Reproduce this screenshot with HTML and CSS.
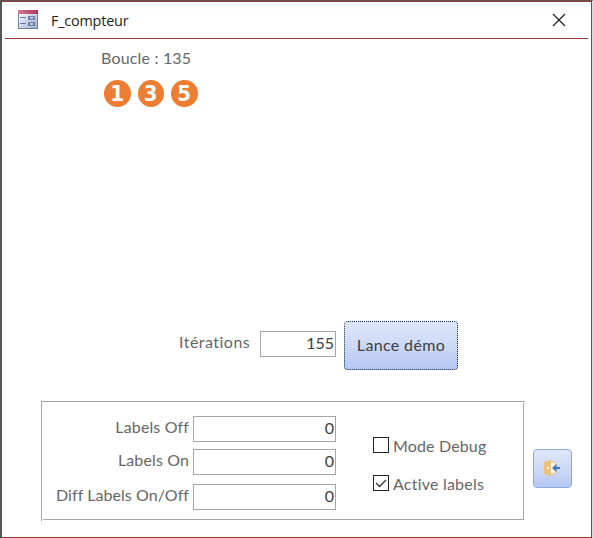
FILE: index.html
```html
<!DOCTYPE html>
<html lang="fr">
<head>
<meta charset="utf-8">
<title>F_compteur</title>
<link rel="stylesheet" href="styles.css">
</head>
<body>
<main class="window">
  <header class="titlebar">
    <svg class="form-icon" width="20" height="19" viewBox="0 0 20 19" shape-rendering="crispEdges">
      <defs><linearGradient id="paper" x1="0" y1="0" x2="1" y2="1"><stop offset="0" stop-color="#fff"/><stop offset="1" stop-color="#9cadd3"/></linearGradient>
      <linearGradient id="bar" x1="0" x2="1"><stop offset="0" stop-color="#d87a9b"/><stop offset="1" stop-color="#aa3455"/></linearGradient></defs>
      <rect x=".5" y=".5" width="19" height="18" fill="url(#paper)" stroke="#71809e"/>
      <rect width="20" height="4" fill="url(#bar)"/>
      <path d="M2 7h6v1H2zM2 13h6v1H2z" fill="#687ba0"/>
      <path d="M10 6h7v4h-7zM10 12h7v4h-7z" fill="#7181a3"/><path d="M12 7h3v2h-3zM12 13h3v2h-3z" fill="#bdc9e0"/>
    </svg>
    <h1 class="title">F_compteur</h1>
    <svg class="close" width="14" height="14" viewBox="0 0 14 14"><path d="M1 1l12 12M13 1L1 13" stroke="#222" stroke-width="1.3"/></svg>
  </header>
  <section class="counter">
    <p class="loop"><span class="label">Boucle : 135</span></p>
    <div class="digits"><span>1</span><span>3</span><span>5</span></div>
  </section>
  <section class="launch">
    <span class="label iterations">Itérations</span>
    <div class="field short">155</div>
    <button class="start">Lance démo</button>
  </section>
  <section class="bottom">
    <div class="panel">
      <div class="results">
        <span class="label">Labels Off</span><div class="field">0</div>
        <span class="label">Labels On</span><div class="field">0</div>
        <span class="label diff">Diff Labels On/Off</span><div class="field">0</div>
      </div>
      <div class="options">
        <div class="option"><svg width="16" height="16"><rect x=".5" y=".5" width="15" height="15" fill="#fff" stroke="#222"/></svg><span class="label debug">Mode Debug</span></div>
        <div class="option"><svg width="16" height="16"><rect x=".5" y=".5" width="15" height="15" fill="#fff" stroke="#222"/><path d="M3 8l3.500 3.500L13 5" fill="none" stroke="#333" stroke-width="1.300"/></svg><span class="label active">Active labels</span></div>
      </div>
    </div>
    <button class="exit" aria-label="Quitter">
      <svg width="18" height="16" viewBox="0 0 18 16"><path d="M6 2h5v12H6z" fill="#fff" stroke="#edc17c"/><path d="M0 2L7 0v16L0 14z" fill="#edc17c"/><circle cx="4" cy="8" r="1" fill="#fff"/><path d="M8 8l4.500-4V7H16v2h-3.500v3z" fill="#4076b5"/></svg>
    </button>
  </section>
</main>
</body>
</html>
```
FILE: styles.css
```css
* { box-sizing: border-box; }
body { margin: 0; background: #fff; font-family: Lato, sans-serif; color: #666; font-variant-ligatures: none; }
.window { width: 593px; height: 538px; border-top: 1px solid #555; border-left: 1px solid #555; border-right: 1px solid #ddd; box-shadow: inset 0 0 0 1px #a4373a; padding: 1px; display: flex; flex-direction: column; overflow: hidden; }
.titlebar { height: 37px; margin: 0 3px; border-bottom: 1px solid #a4373a; display: flex; align-items: flex-start; padding: 8px 22px 0 13px; flex: none; background: linear-gradient(#f7faff, #fff 25%); }
.title { margin: 1px auto 0 13px; font: 14.4px/20px "Open Sans", sans-serif; color: #222; letter-spacing: -.2px; }
.close { margin-top: 3px; }
.label { font-size: 16px; line-height: 20px; white-space: nowrap; letter-spacing: .1px; }
.counter { height: 282px; padding: 9px 0 0 99px; flex: none; }
.loop { margin: 0; height: 20px; line-height: 20px; }
.loop .label { letter-spacing: .18px; }
.digits { display: flex; gap: 7px; margin: 12px 0 0 3px; }
.digits span { width: 26.5px; height: 27px; border-radius: 50%; background: #ed7d31; color: #fff; font: bold 22px/27px "DejaVu Sans", "DejaVu Sans Condensed", sans-serif; font-stretch: condensed; text-align: center; }
.launch { display: flex; height: 80px; padding-left: 177px; flex: none; }
.launch .iterations { width: 81px; margin-top: 11px; letter-spacing: .48px; }
.field { width: 143px; height: 26px; border: 1px solid #a6a6a6; text-align: right; padding-right: 1px; font-size: 16px; line-height: 22px; color: #404040; }
.field.short { width: 76px; margin-top: 10px; }
button { padding: 0; border: 1px solid #8faadc; border-radius: 4px; background: linear-gradient(#dfe7f9, #cdd9f6 50%, #b4c7f2); color: #404040; }
.start { width: 114px; height: 49px; margin-left: 8px; border: 1px dotted #1b2a50; background-origin: border-box; font: 16px/20px Lato, sans-serif; letter-spacing: .35px; padding-bottom: 2px; }
.bottom { display: flex; padding-left: 39px; }
.panel { --edge: linear-gradient(#a6a6a6, #a6a6a6); width: 484px; height: 120px; padding: 1px; display: flex; background: var(--edge) 0 0 / 484px 1px no-repeat, var(--edge) 0 0 / 1px 120px no-repeat, var(--edge) 2px 118px / 481px 1px no-repeat, var(--edge) 482px 2px / 1px 117px no-repeat; }
.results { width: 295px; padding-top: 14px; display: grid; grid-template-columns: 147px 143px; column-gap: 4px; grid-template-rows: 33px 35px 26px; }
.results .label { text-align: right; margin-top: 1px; letter-spacing: .13px; }
.results .diff { letter-spacing: .06px; }
.options { padding: 35px 0 0 36px; display: flex; flex-direction: column; gap: 18px; }
.option { display: flex; height: 20px; gap: 4px; }
.option .label { margin-top: -1px; }
.debug { letter-spacing: .15px; }
.active { letter-spacing: .22px; }
.exit { width: 39px; height: 39px; margin: 48px 0 0 8px; display: flex; padding: 10px 0 0 10px; }
```
